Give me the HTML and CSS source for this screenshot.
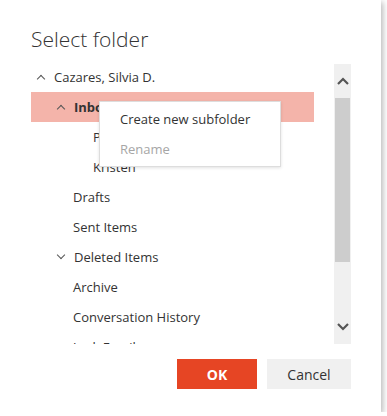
FILE: index.html
```html
<!DOCTYPE html>
<html lang="en">
<head>
  <meta charset="UTF-8">
  <title>Select folder</title>
  <link rel="stylesheet" href="styles.css">
</head>
<body>

  <div class="dialog">
    <h1 class="title">Select folder</h1>

    <div class="picker">
      <div class="tree">
        <div class="row level0"><span class="chev up"></span>Cazares, Silvia D.</div>
        <div class="row level1 selected"><span class="chev up"></span><b>Inbox</b></div>
        <div class="row level2">Projects</div>
        <div class="row level2">Kristen</div>
        <div class="row level1">Drafts</div>
        <div class="row level1">Sent Items</div>
        <div class="row level1"><span class="chev down"></span>Deleted Items</div>
        <div class="row level1">Archive</div>
        <div class="row level1">Conversation History</div>
        <div class="row level1">Junk Email</div>

        <div class="menu">
          <div class="menu-item">Create new subfolder</div>
          <div class="menu-item disabled">Rename</div>
        </div>
      </div>

      <div class="scrollbar">
        <div class="arrow">
          <svg width="12" height="8" viewBox="0 0 12 8"><path d="M1 7 L6 2 L11 7" fill="none" stroke="#555" stroke-width="2.2"/></svg>
        </div>
        <div class="thumb"></div>
        <div class="track"></div>
        <div class="arrow">
          <svg width="12" height="8" viewBox="0 0 12 8"><path d="M1 1 L6 6 L11 1" fill="none" stroke="#555" stroke-width="2.2"/></svg>
        </div>
      </div>
    </div>

    <div class="footer">
      <button class="btn primary">OK</button>
      <button class="btn">Cancel</button>
    </div>
  </div>

</body>
</html>
```

FILE: styles.css
```css
body {
  margin: 0;
  background: #fff;
  font-family: 'Open Sans', 'Noto Sans', sans-serif;
  color: #333;
}

.dialog {
  box-sizing: border-box;
  width: 381px;
  height: 412px;
  padding: 25px 30px 0 31px;
  background: #fff;
  box-shadow: 2px 2px 6px rgba(0,0,0,0.28);
}

.title {
  margin: 0;
  height: 37px;
  font-size: 21px;
  font-weight: 300;
  line-height: 28px;
  color: #333;
}

.picker {
  display: flex;
  gap: 20px;
}

.tree {
  position: relative;
  width: 283px;
  height: 282px;
  overflow: hidden;
}

.row {
  height: 30px;
  line-height: 30px;
  font-size: 13px;
  white-space: nowrap;
  display: flex;
  align-items: center;
}

.row b {
  font-weight: 700;
}

.level0 { padding-left: 22px; }
.level1 { padding-left: 42px; }
.level2 { padding-left: 62px; }

.selected {
  background: #f4b4aa;
}

.chev {
  width: 5px;
  height: 5px;
  margin-left: -15px;
  margin-right: 10px;
  border-left: 1.4px solid #555;
  border-top: 1.4px solid #555;
}

.chev.up {
  transform: translateY(2px) rotate(45deg);
}

.chev.down {
  transform: translateY(-2px) rotate(225deg);
}

.menu {
  position: absolute;
  left: 68px;
  top: 39px;
  width: 180px;
  padding: 2px 0;
  background: #fff;
  border: 1px solid #ddd;
  box-shadow: 0 1px 3px rgba(0,0,0,0.12);
}

.menu-item {
  height: 30px;
  line-height: 30px;
  padding-left: 20px;
  font-size: 13px;
  color: #333;
}

.menu-item.disabled {
  color: #a6a6a6;
}

.scrollbar {
  display: flex;
  flex-direction: column;
  width: 17px;
  height: 280px;
  margin-top: 2px;
  background: #f0f0f0;
}

.arrow {
  height: 34px;
  display: flex;
  align-items: center;
  justify-content: center;
}

.thumb {
  height: 164px;
  margin: 0 1px;
  background: #cdcdcd;
}

.track {
  flex: 1;
}

.footer {
  display: flex;
  justify-content: flex-end;
  gap: 10px;
  margin-top: 15px;
}

.btn {
  height: 30px;
  width: 84px;
  border: none;
  background: #f0f0f0;
  color: #333;
  font-family: inherit;
  font-size: 14px;
  cursor: pointer;
}

.btn.primary {
  width: 80px;
  background: #e64524;
  color: #fff;
  font-weight: 700;
}
```
